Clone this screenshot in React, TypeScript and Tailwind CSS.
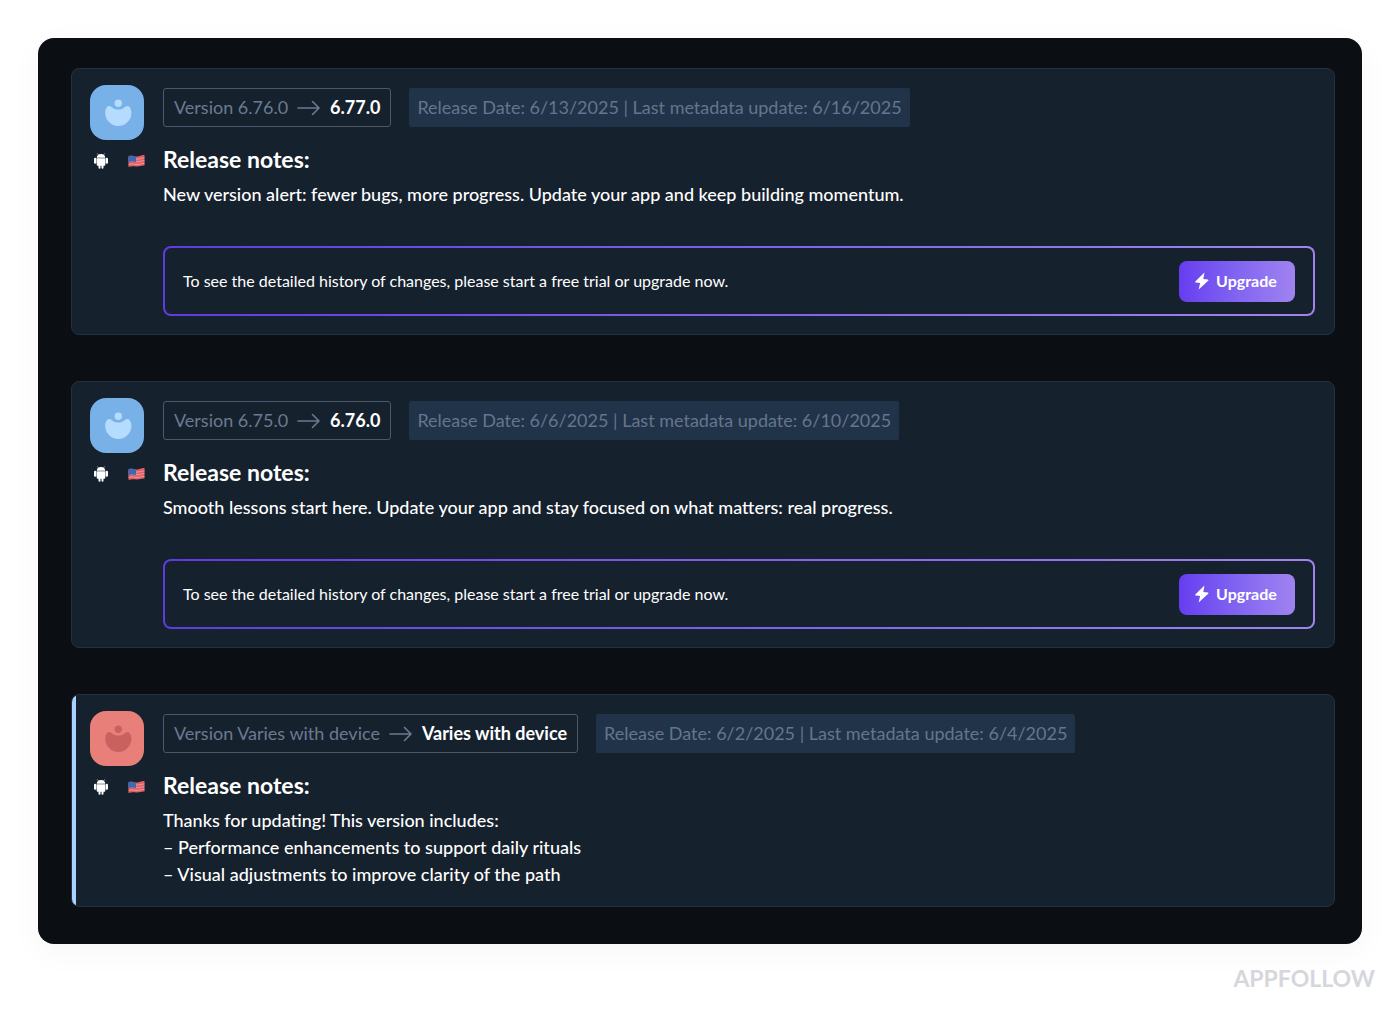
import React from 'react';

interface Release {
    id: number;
    from: string;
    to: string;
    releaseDate: string;
    metadataDate: string;
    notes: string[];
    tone: 'blue' | 'red';
    locked: boolean;
}

const releases: Release[] = [
    {
        id: 1,
        from: '6.76.0',
        to: '6.77.0',
        releaseDate: '6/13/2025',
        metadataDate: '6/16/2025',
        notes: ['New version alert: fewer bugs, more progress. Update your app and keep building momentum.'],
        tone: 'blue',
        locked: true,
    },
    {
        id: 2,
        from: '6.75.0',
        to: '6.76.0',
        releaseDate: '6/6/2025',
        metadataDate: '6/10/2025',
        notes: ['Smooth lessons start here. Update your app and stay focused on what matters: real progress.'],
        tone: 'blue',
        locked: true,
    },
    {
        id: 3,
        from: 'Varies with device',
        to: 'Varies with device',
        releaseDate: '6/2/2025',
        metadataDate: '6/4/2025',
        notes: [
            'Thanks for updating! This version includes:',
            '– Performance enhancements to support daily rituals',
            '– Visual adjustments to improve clarity of the path',
        ],
        tone: 'red',
        locked: false,
    },
];

function AppIcon({ tone }: { tone: Release['tone'] }) {
    const colors = tone === 'blue' ? 'bg-[#78b0e8] text-[#b5dcff]' : 'bg-[#e87f79] text-[#c9625f]';
    return (
        <div className={`h-[55px] w-[54px] rounded-2xl ${colors}`}>
            <svg viewBox="0 0 54 55" className="h-full w-full" fill="currentColor" aria-hidden="true">
                <circle cx="28.3" cy="18.3" r="3.7" />
                <path d="M19.2 20.9c2.6 0 3.6 3.7 9.1 3.7s6.5-3.7 9.1-3.7c2.4 0 4 3.4 4 6.9 0 7.3-5.9 13.2-13.1 13.2S15.2 35.1 15.2 27.8c0-3.5 1.6-6.9 4-6.9z" />
            </svg>
        </div>
    );
}

function AndroidIcon() {
    return (
        <svg viewBox="0 0 16 16" className="h-4 w-4" fill="#fff" aria-label="Android" role="img">
            <path d="M4.3 0.5l1.1 1.3M11.7 0.5l-1.1 1.3" stroke="#fff" strokeWidth="0.7" />
            <path d="M3.7 4.8C3.7 2.5 5.6 1 8 1s4.3 1.5 4.3 3.8z" />
            <path d="M3.7 5.2h8.6v6.5a1 1 0 0 1-1 1h-.8v2a1 1 0 0 1-2 0v-2h-1v2a1 1 0 0 1-2 0v-2h-.8a1 1 0 0 1-1-1z" />
            <rect x="1" y="4.8" width="2.4" height="6" rx="1.2" />
            <rect x="12.6" y="4.8" width="2.4" height="6" rx="1.2" />
        </svg>
    );
}

function FlagIcon() {
    return (
        <svg viewBox="0 0 17 14" className="h-[14px] w-[17px]" aria-label="United States" role="img">
            <path d="M0.5 2.2c4-1.6 6 1 10 0 2.2-.5 4-1.3 6-1.2v10.6c-3-.2-5 1-8 .8-3-.1-5-.6-8 .6z" fill="#e05f64" />
            <path
                d="M0.5 5c4-1.5 6 .8 10 0 2.2-.4 4-1.2 6-1.1M0.5 7.7c4-1.5 6 .8 10 0 2.2-.4 4-1.2 6-1.1M0.5 10.4c4-1.5 6 .8 10 0 2.2-.4 4-1.2 6-1.1"
                fill="none"
                stroke="#eda9ad"
                strokeWidth="0.8"
            />
            <path d="M0.5 2.2c3-1.2 5 0 7.5.2v5.6c-2.5-.2-4.5-1-7.5.2z" fill="#3d68b4" />
        </svg>
    );
}

function ArrowIcon() {
    return (
        <svg viewBox="0 0 24 16" className="h-4 w-6" fill="none" stroke="currentColor" strokeWidth="1.6" aria-hidden="true">
            <path d="M1 8h21M15.5 1.5L22 8l-6.5 6.5" strokeLinecap="round" strokeLinejoin="round" />
        </svg>
    );
}

function UpgradeBanner() {
    return (
        <div className="mt-[38px] flex h-[70px] items-center justify-between gap-4 rounded-lg border-2 border-transparent px-[18px] [background:linear-gradient(#16212e,#16212e)_padding-box,linear-gradient(90deg,#5f3be0,#a084ee)_border-box]">
            <p className="text-base">
                To see the detailed history of changes, please start a free trial or upgrade now.
            </p>
            <button
                type="button"
                className="flex h-[41px] w-[116px] shrink-0 items-center justify-center gap-[7px] rounded-lg bg-linear-to-r from-[#673cf0] to-[#a083f0] pr-[2px] text-base font-bold"
            >
                <svg viewBox="0 0 14 18" className="h-[18px] w-[14px]" fill="currentColor" aria-hidden="true">
                    <path d="M9.5 0.5L0.5 9.2c-.5.6-.3 1.3.4 1.4l4.2.4-1.4 6.5 9.5-8.7c.5-.6.3-1.3-.4-1.4l-4.5-.4z" />
                </svg>
                Upgrade
            </button>
        </div>
    );
}

function ReleaseCard({ release }: { release: Release }) {
    return (
        <article className="relative flex overflow-hidden rounded-lg border border-[#223142] bg-[#16212e] pt-4 pr-[19px] pb-[18px] pl-[18px]">
            {!release.locked && <span className="absolute inset-y-0 left-0 w-1 bg-[#a8d2ff]" />}
            <div className="w-[55px] shrink-0">
                <AppIcon tone={release.tone} />
                <div className="mt-[13px] flex items-center justify-between pl-[3px]">
                    <AndroidIcon />
                    <FlagIcon />
                </div>
            </div>
            <div className="ml-[18px] min-w-0 flex-1 pt-[3px]">
                <div className="flex flex-wrap gap-[18px] text-[18px] text-[#6b7a90]">
                    <div className="flex h-[39px] items-center gap-[9px] rounded-[3px] border border-[#4c596b] px-[10px]">
                        <span>Version {release.from}</span>
                        <ArrowIcon />
                        <span className="font-bold text-white">{release.to}</span>
                    </div>
                    <div className="flex h-[39px] items-center rounded-xs bg-[#203349] px-2 text-[#65758d]">
                        Release Date: {release.releaseDate} | Last metadata update: {release.metadataDate}
                    </div>
                </div>
                <h2 className="mt-4 text-[23px] leading-8 font-bold">Release notes:</h2>
                <div className="mt-[6px] text-[18px] leading-[27px] font-medium">
                    {release.notes.map((line) => (
                        <p key={line}>{line}</p>
                    ))}
                </div>
                {release.locked && <UpgradeBanner />}
            </div>
        </article>
    );
}

export default function App() {
    return (
        <div className="min-h-screen bg-white px-[38px] pt-[38px] font-['Lato',sans-serif] text-white">
            <main className="flex flex-col gap-[46px] rounded-2xl bg-[#0b0e13] pt-[30px] pr-[27px] pb-[37px] pl-[33px] shadow-[0_8px_32px_rgba(0,0,0,0.04)]">
                {releases.map((release) => (
                    <ReleaseCard key={release.id} release={release} />
                ))}
            </main>
            <footer className="-mr-[13px] mt-[18px] text-right text-[23px] leading-8 font-bold text-[#d5d7dc]">
                APPFOLLOW
            </footer>
        </div>
    );
}
